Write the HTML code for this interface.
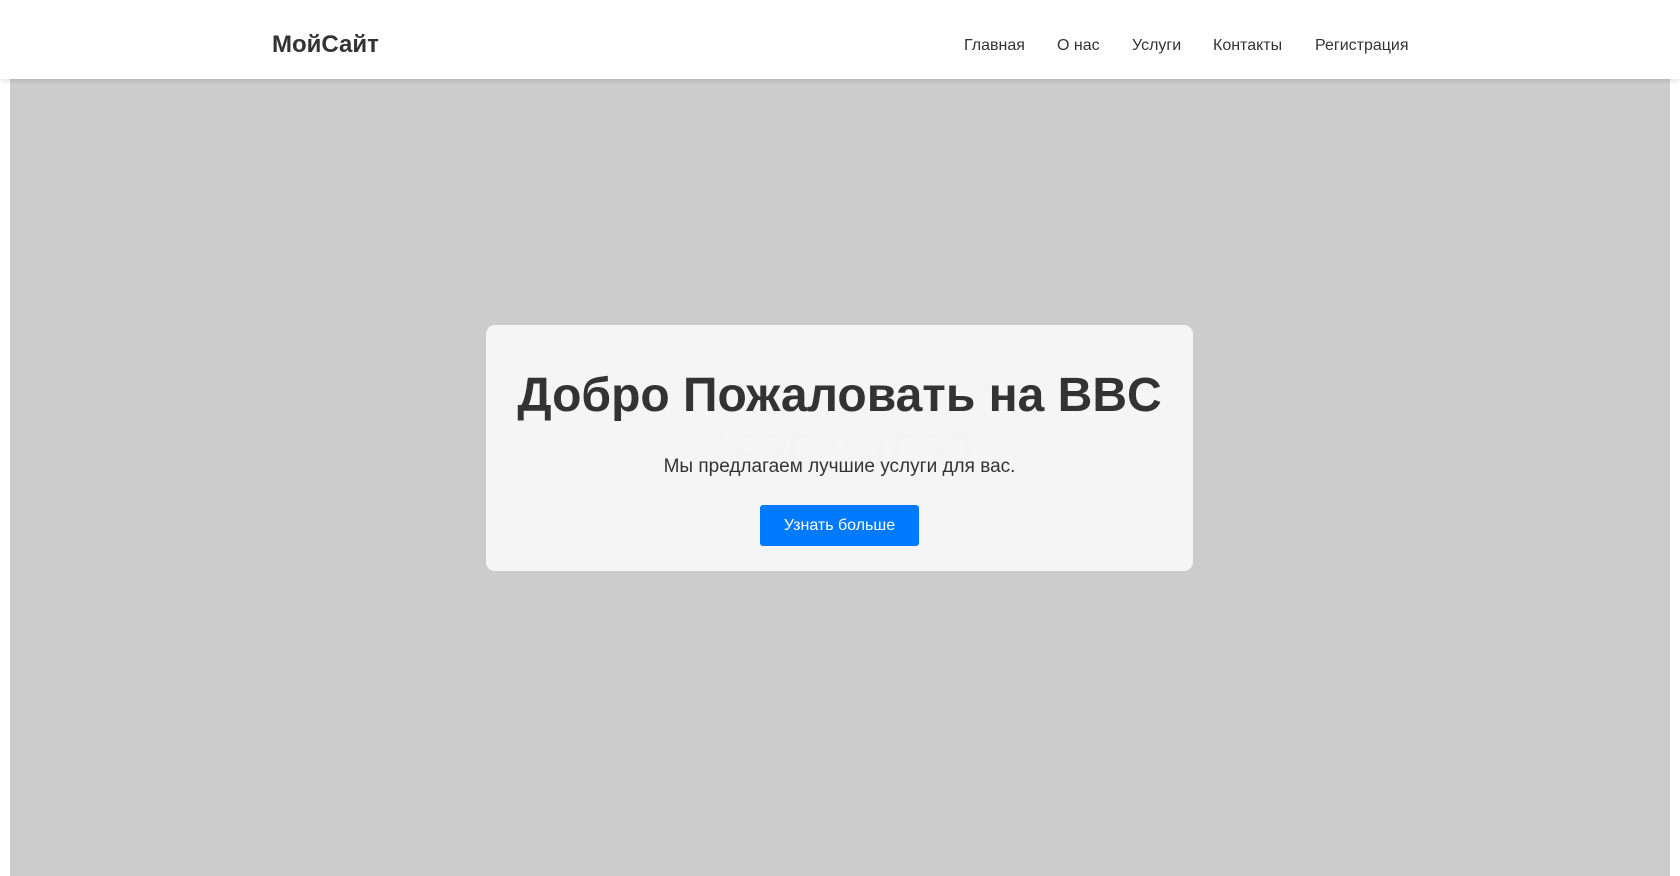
<!DOCTYPE html>
<html><head><meta charset="utf-8"><style>
*{margin:0;padding:0;box-sizing:border-box}
html,body{width:1680px;height:876px;overflow:hidden;background:#fff;font-family:"Liberation Sans",sans-serif;color:#333}
header{position:absolute;left:0;top:0;width:1680px;height:79px;background:#fff;box-shadow:0 2px 5px rgba(0,0,0,.12);z-index:5}
.logo{position:absolute;left:272px;top:31px;font-size:24px;font-weight:bold;color:#333}
nav{position:absolute;top:37px;font-size:16px;color:#333}
.hero{position:absolute;left:10px;top:79px;width:1660px;height:797px;background:#ccc}
.ghost{position:absolute;left:0;width:1680px;top:425px;text-align:center;font-size:48px;color:#c7c7c7}
.card{position:absolute;left:486px;top:325px;width:707px;height:246px;background:rgba(255,255,255,.8);border-radius:9px;text-align:center}
h1{position:absolute;left:0;width:100%;top:43px;font-size:48px;font-weight:bold;color:#333}
p{position:absolute;left:0;width:100%;top:131px;font-size:19px;color:#333}
.btn{position:absolute;left:274px;top:180px;width:159px;height:41px;background:#007bff;color:#fff;border-radius:3px;font-size:16px;line-height:41px}
</style></head><body>
<header><div class="logo">МойСайт</div>
<nav style="left:964px">Главная</nav><nav style="left:1057px">О нас</nav><nav style="left:1132px">Услуги</nav><nav style="left:1213px">Контакты</nav><nav style="left:1315px">Регистрация</nav>
</header>
<div class="hero"></div>
<div class="ghost">1920 x 1080</div>
<div class="card"><h1>Добро Пожаловать на BBC</h1><p>Мы предлагаем лучшие услуги для вас.</p><div class="btn">Узнать больше</div></div>
</body></html>
